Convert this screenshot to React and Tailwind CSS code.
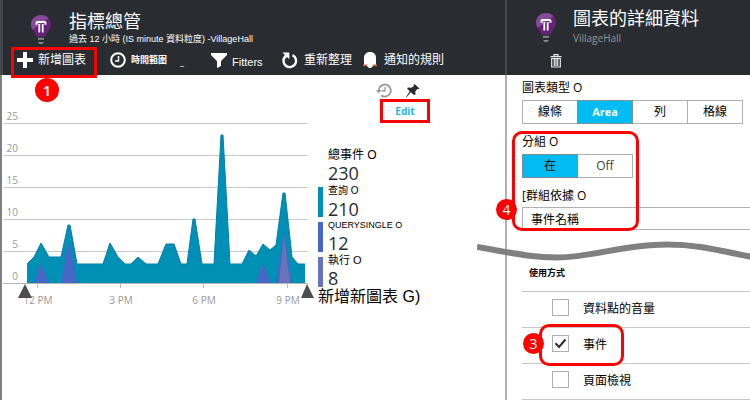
import React from "react";

const total =
  "27,283 27,264 34,257 41,243 49,257 61,257 68,225 70,225 77,264 103,264 110,243 118,257 125,264 131,264 138,257 146,264 158,264 166,244 174,244 181,264 187,264 193,219 195,219 202,264 214,264 221,135 223,135 230,264 242,264 249,250 256,256 263,244 270,250 276,245 283,193 285,193 292,257 298,264 305,264 305,283";
const totalLine = total.split(" ").slice(1, -1).join(" ");

const gridLines = [
  { value: 25, y: 123 },
  { value: 20, y: 155 },
  { value: 15, y: 187 },
  { value: 10, y: 219 },
  { value: 5, y: 251 },
  { value: 0, y: 283 },
];

const hours = [
  { label: "12 PM", x: 38 },
  { label: "3 PM", x: 121 },
  { label: "6 PM", x: 204 },
  { label: "9 PM", x: 288 },
];

const legend = [
  { label: "總事件 O", value: "230", bar: "bg-transparent", size: "text-[12px]" },
  { label: "查詢 O", value: "210", bar: "bg-[#008fb5]", size: "text-[10px]" },
  { label: "QUERYSINGLE O", value: "12", bar: "bg-[#4667c6]", size: "text-[9px]" },
  { label: "執行 O", value: "8", bar: "bg-[#6973ba]", size: "text-[11px]" },
];

const usages = [
  { id: "volume", label: "資料點的音量", checked: false },
  { id: "events", label: "事件", checked: true },
  { id: "pages", label: "頁面檢視", checked: false },
];

function Bulb() {
  return (
    <svg width="20" height="30" viewBox="0 0 20 30" aria-hidden="true" className="shrink-0">
      <path d="M10 0C4.300 0 0 4.300 0 9.500c0 3.200 1.500 5.200 3.100 7.300C4.300 18.400 5 19.500 5 21.500h10c0-2 .7-3.100 1.900-4.700C18.500 14.700 20 12.700 20 9.500 20 4.300 15.700 0 10 0z" fill="#68217a" />
      <path d="M10 0C4.300 0 0 4.300 0 9.500c0 2.100.7 3.800 1.700 5.300L17.500 3.200C15.700 1.200 13 0 10 0z" fill="#834b98" />
      <path d="M8.300 17.500V9M11.700 17.500V9" fill="none" stroke="#fff" strokeWidth="1.800" />
      <path d="M5.500 9.800V8a1 1 0 0 1 1-1h7a1 1 0 0 1 1 1v1.800" fill="none" stroke="#fff" strokeWidth="2" />
      <path d="M7 23.800h6" stroke="#85888b" strokeWidth="2" />
      <path d="M7 27h6l-1.500 2h-3z" fill="#85888b" />
    </svg>
  );
}

function Badge({ children, className }) {
  return (
    <span className={`absolute flex items-center justify-center rounded-full bg-[#f00] text-white ${className}`}>
      {children}
    </span>
  );
}

function Segments({ items, active, label }) {
  return (
    <div role="group" aria-label={label} className="mt-1 flex">
      {items.map((item, i) => (
        <button
          key={item}
          type="button"
          aria-pressed={item === active}
          className={`h-6 w-14 border leading-4 ${i > 0 ? "-ml-px" : ""} ${
            item === active
              ? "relative border-[#7f8f96] bg-[#00bcf2]"
              : "border-[#b0b0b0] bg-white"
          } ${
            item === "Area"
              ? "text-[11px] font-bold text-white"
              : item === "Off"
                ? "text-[12px] text-[#444]"
                : "text-[12px] text-black"
          }`}
        >
          {item}
        </button>
      ))}
    </div>
  );
}

function MetricsHeader() {
  return (
    <header className="h-[75px] border-l-[3px] border-[#44484c] bg-[#292d31] text-white">
      <div className="flex h-[45px] pl-7">
        <div className="pt-[15px]"><Bulb /></div>
        <div className="pl-[18px] pt-[9px]">
          <h1 className="text-[18px] leading-6">指標總管</h1>
          <p className="whitespace-nowrap font-['Liberation_Sans','Noto_Sans_CJK_TC',sans-serif] text-[9px] leading-3">
            過去 12 小時 (IS minute 資料粒度) -VillageHall
          </p>
        </div>
      </div>
      <div className="flex h-[30px] items-center whitespace-nowrap pl-[14px] text-[12px]">
        <button type="button" className="flex w-[93px] items-center gap-[5px]">
          <svg width="16" height="16" viewBox="0 0 16 16" aria-hidden="true"><path d="M8 0v16M0 8h16" stroke="#fff" strokeWidth="4" /></svg>
          新增圖表
        </button>
        <button type="button" className="flex w-[101px] items-center gap-[5px] text-[9px] font-bold">
          <svg width="16" height="16" viewBox="0 0 16 16" aria-hidden="true">
            <circle cx="8" cy="8" r="6.800" fill="none" stroke="#fff" strokeWidth="2" />
            <path d="M8.500 4v5H5" fill="none" stroke="#fff" strokeWidth="1.500" />
          </svg>
          時間範圍
          <span className="pl-2 pt-1 font-normal">_</span>
        </button>
        <button type="button" className="flex w-[71px] items-center gap-[5px] font-['Liberation_Sans',sans-serif] text-[11px]">
          <svg width="16" height="15" viewBox="0 0 16 15" aria-hidden="true"><path d="M0 0h16v2l-6 6v5l-4 2V8L0 2z" fill="#fff" /></svg>
          <span className="pt-1">Fitters</span>
        </button>
        <button type="button" className="flex w-[80px] items-center gap-[6px]">
          <svg width="16" height="17" viewBox="0 0 16 17" aria-hidden="true">
            <path d="M10.500 3.100a6.300 6.300 0 1 1-6.800.9" fill="none" stroke="#fff" strokeWidth="2.400" />
            <path d="M.5.500h6.800v6.800L5 5 3.300 6.500 1.700 4.600 3 3z" fill="#fff" />
          </svg>
          重新整理
        </button>
        <button type="button" className="flex items-center gap-[6px]">
          <svg width="16" height="16" viewBox="0 0 16 16" aria-hidden="true">
            <path d="M2 13V6c0-3.500 2-6 6-6s6 2.500 6 6v7z" fill="#fff" />
            <path d="M1 13.300h14" stroke="#d9683c" strokeWidth="1.600" />
            <path d="M5 12h6c0 2.600-1 4-3 4s-3-1.400-3-4z" fill="#fff" />
          </svg>
          通知的規則
        </button>
      </div>
    </header>
  );
}

function Chart() {
  return (
    <svg width="312" height="200" viewBox="2 110 312 200" role="img" aria-label="指標總管" className="shrink-0">
      {gridLines.map((g) => (
        <g key={g.value}>
          <path d={`M3 ${g.y + 0.5}H308`} stroke="#c8c8c8" />
          <text x="18" y={g.y - 3} textAnchor="end" fontSize="10" fill="#999">{g.value}</text>
        </g>
      ))}
      <polygon points={total} fill="#008fb5" />
      <polyline points={totalLine} fill="none" stroke="#007eab" />
      <path d="M34 283L41 263L49 283zM61 283L68 245H70L77 283zM256 283L263 263L271 283zM276 283L284 232L292 283z" fill="#4667c6" />
      <path d="M279 283L284 236L290 283z" fill="#6973ba" />
      <path d="M3 283.500H308" stroke="#b5b5b5" />
      {hours.map((h) => (
        <g key={h.label}>
          <path d={`M${h.x - 0.5} 284v4`} stroke="#bbb" />
          <text x={h.x} y="304" textAnchor="middle" fontSize="10" fill="#999">{h.label}</text>
        </g>
      ))}
      <path d="M18 298L25 284L32 298zM301 298L307 284L314 298z" fill="#4d4d4d" />
    </svg>
  );
}

function MetricsPanel() {
  return (
    <section className="flex w-[505px] shrink-0 flex-col">
      <MetricsHeader />
      <div className="flex flex-1 border-l-2 border-[#7f7f7f] bg-white">
        <div className="pt-[35px]"><Chart /></div>
        <div className="flex flex-col pl-1">
          <div className="flex items-center gap-[14px] pl-[58px] pt-2">
            <button type="button" aria-label="歷程記錄">
              <svg width="16" height="15" viewBox="0 0 16 15" aria-hidden="true">
                <path d="M2.800 7.500A6 6 0 1 1 5 12.200" fill="none" stroke="#999" strokeWidth="1.800" />
                <path d="M0 7h5.600L2.800 10.200z" fill="#999" />
                <path d="M9 4v4H5.800" fill="none" stroke="#999" strokeWidth="1.300" />
              </svg>
            </button>
            <button type="button" aria-label="釘選">
              <svg width="14" height="15" viewBox="0 0 14 15" aria-hidden="true">
                <path d="M8.500 1L13.500 5.500 12.300 6.300 11.300 6 9.300 8.500 9.500 11.500 8 12 4.800 9.300.3 14.500.0 14 3.700 8.300 1.200 5.800 1.800 4.500 5.200 4.700 8 3 7.600 1.800z" fill="#292d31" />
              </svg>
            </button>
          </div>
          <button type="button" className="ml-[62px] mt-px h-6 w-[50px] border-3 border-[#f00] text-[10px] font-bold leading-3 text-[#1eb5ee]">
            Edit
          </button>
          <dl className="mt-6">
            {legend.map((item) => (
              <div key={item.label} className="flex h-[35px] gap-[5px]">
                <span className={`mt-[5px] w-[5px] ${item.bar}`} />
                <div>
                  <dt className={`whitespace-nowrap leading-4 text-black ${item.size}`}>
                    <span className="font-['Liberation_Sans','Noto_Sans_CJK_TC',sans-serif]">{item.label}</span>
                  </dt>
                  <dd className="text-[18px] leading-5 text-[#292d31]">{item.value}</dd>
                </div>
              </div>
            ))}
          </dl>
          <button type="button" className="whitespace-nowrap text-left font-['Liberation_Sans','Noto_Sans_CJK_TC',sans-serif] text-[16px] leading-5 text-black">
            新增新圖表 G)
          </button>
        </div>
      </div>
    </section>
  );
}

function DetailsPanel() {
  return (
    <section className="flex min-w-0 flex-1 flex-col">
      <header className="h-[75px] border-l-2 border-[#44484c] bg-[#292d31] text-white">
        <div className="flex h-[45px] pl-[29px]">
          <div className="pt-[13px]"><Bulb /></div>
          <div className="pl-[17px] pt-[6px]">
            <h2 className="whitespace-nowrap text-[18px] leading-6">圖表的詳細資料</h2>
            <p className="text-[10px] leading-4 text-[#94979a]">VillageHall</p>
          </div>
        </div>
        <button type="button" aria-label="刪除" className="ml-[43px] mt-[9px] block">
          <svg width="12" height="14" viewBox="0 0 12 14" aria-hidden="true">
            <path d="M4 2V.7h4V2M.5 2.700h11M1.700 4.500h8.600V13H1.700zM4.300 5v7M6 5v7M7.700 5v7" fill="none" stroke="#e8e8e8" strokeWidth="1.200" />
          </svg>
        </button>
      </header>
      <div className="flex-1 border-l-2 border-[#b0b0b0] bg-white pl-[15px] text-[12px] leading-4 text-black">
        <h3 className="pt-[5px]">圖表類型 O</h3>
        <Segments label="圖表類型" items={["線條", "Area", "列", "格線"]} active="Area" />
        <h3 className="mt-[10px]">分組 O</h3>
        <Segments label="分組" items={["在", "Off"]} active="在" />
        <label htmlFor="group-by" className="mt-[10px] block">[群組依據 O</label>
        <input id="group-by" type="text" defaultValue="事件名稱" className="mt-[3px] block h-[23px] w-full border border-r-0 border-[#b0b0b0] bg-white pl-2" />
        <h3 className="mt-[37px] pl-[7px] text-[9px] font-bold leading-3">使用方式</h3>
        <ul className="mt-3 border-b border-[#c8c8c8]">
          {usages.map((u) => (
            <li key={u.id} className="flex h-9 items-start border-t border-[#c8c8c8] pl-[30px] pt-[7px]">
              <span className="grid">
                <input id={u.id} type="checkbox" defaultChecked={u.checked} className="peer col-start-1 row-start-1 size-[17px] appearance-none border border-[#b0b0b0] bg-white" />
                <svg viewBox="0 0 17 17" aria-hidden="true" className="pointer-events-none invisible col-start-1 row-start-1 size-[17px] peer-checked:visible">
                  <path d="M3.500 8.300L7 12 13.500 4.500" fill="none" stroke="#292d31" strokeWidth="2" />
                </svg>
              </span>
              <label htmlFor={u.id} className="pl-[14px] pt-[2px]">{u.label}</label>
            </li>
          ))}
        </ul>
      </div>
    </section>
  );
}

export default function App() {
  return (
    <main className="relative flex min-h-screen overflow-hidden bg-white font-['Open_Sans','Noto_Sans_CJK_TC',sans-serif]">
      <MetricsPanel />
      <DetailsPanel />
      <div className="pointer-events-none absolute inset-0">
        <span className="absolute left-[11px] top-[47px] h-[31px] w-[86px] border-3 border-[#f00]" />
        <Badge className="left-[35px] top-[78px] size-6 text-[15px] font-semibold">1</Badge>
        <span className="absolute left-[512px] top-[131px] h-[100px] w-[127px] rounded-[10px] border-3 border-[#f00]" />
        <Badge className="left-[496px] top-[199px] size-[21px] text-[14px]">4</Badge>
        <span className="absolute left-[539px] top-[324px] h-[42px] w-[85px] rounded-[10px] border-3 border-[#f00]" />
        <Badge className="left-[523px] top-[333px] size-[21px] text-[14px]">3</Badge>
        <svg width="275" height="24" viewBox="0 0 275 24" aria-hidden="true" className="absolute left-[477px] top-[238px]">
          <path d="M0 9C35 15 55 19.500 80 19.500C115 19.500 145 6.500 190 6.500C220 6.500 240 12 275 19" fill="none" stroke="#808080" strokeWidth="6" />
        </svg>
      </div>
    </main>
  );
}
